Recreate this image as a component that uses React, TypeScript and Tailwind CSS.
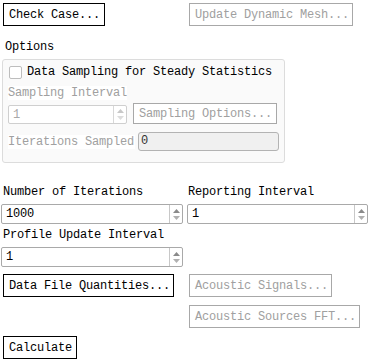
import React from "react";

const font = { fontFamily: '"Liberation Mono", "DejaVu Sans Mono", monospace' };

function Btn({ label, w, disabled, className = "" }: { label: string; w: string; disabled?: boolean; className?: string }) {
  return (
    <button
      className={`h-[23px] ${w} shrink-0 border text-left pl-[5px] text-[12px] leading-[20px] tracking-[-0.2px] whitespace-nowrap bg-white ${
        disabled ? "border-[#a8a8a8] text-[#a0a0a0]" : "border-black text-black"
      } ${className}`}
    >
      {label}
    </button>
  );
}

function Arrows({ disabled }: { disabled?: boolean }) {
  const c = disabled ? "#c8c8c8" : "#8a8a8a";
  return (
    <div className={`w-[13px] h-full flex flex-col items-center justify-center gap-[3px] border-l ${disabled ? "border-[#d8d8d8]" : "border-[#c8c8c8]"}`}>
      <svg width="7" height="4" viewBox="0 0 7 4">
        <path d="M3.5 0 L7 4 L0 4 Z" fill={c} />
      </svg>
      <svg width="7" height="4" viewBox="0 0 7 4">
        <path d="M0 0 L7 0 L3.5 4 Z" fill={disabled ? "#dcdcdc" : "#b0b0b0"} />
      </svg>
    </div>
  );
}

function Spinner({ value, w, h = "h-[20px]", disabled, className = "" }: { value: string; w: string; h?: string; disabled?: boolean; className?: string }) {
  return (
    <div
      className={`${w} ${h} shrink-0 flex border rounded-[2px] bg-white ${
        disabled ? "border-[#cfcfcf] text-[#a8a8a8]" : "border-[#a9a9a9] text-black"
      } ${className}`}
    >
      <div className="flex-1 pl-[4px] text-[12px] leading-[18px] tracking-[-0.2px]">{value}</div>
      <Arrows disabled={disabled} />
    </div>
  );
}

export default function App() {
  return (
    <div className="w-[369px] h-[362px] bg-white text-black text-[12px] tracking-[-0.2px] overflow-hidden" style={font}>
      <div className="flex pt-[3px]">
        <Btn label="Check Case..." w="w-[102px]" className="ml-[3px]" />
        <Btn label="Update Dynamic Mesh..." w="w-[164px]" disabled className="ml-[84px]" />
      </div>

      <div className="mt-[13px] h-[16px] leading-[16px] pl-[5px]">Options</div>

      <div className="mt-[4px] ml-[2px] w-[283px] h-[104px] border border-[#dcdcdc] rounded-[3px] bg-[#fafafa]">
        <div className="mt-[5px] h-[15px] flex items-center">
          <div className="ml-[6px] w-[13px] h-[13px] shrink-0 border border-[#bdbdbd] rounded-[2px] bg-white" />
          <span className="ml-[5px] leading-[15px] whitespace-nowrap">Data Sampling for Steady Statistics</span>
        </div>
        <div className="mt-[6px] h-[14px] leading-[14px] ml-[5px] w-fit bg-white text-[#a0a0a0] whitespace-nowrap">Sampling Interval</div>
        <div className="mt-[3px] flex items-start">
          <Spinner value="1" w="w-[119px]" h="h-[19px]" disabled className="ml-[5px] mt-[2px]" />
          <Btn label="Sampling Options..." w="w-[144px]" disabled className="ml-[6px] !h-[21px] !leading-[18px]" />
        </div>
        <div className="mt-[8px] flex items-center">
          <span className="ml-[5px] w-[127px] shrink-0 bg-white text-[#a0a0a0] leading-[14px] whitespace-nowrap">Iterations Sampled</span>
          <div className="ml-[3px] w-[141px] h-[19px] shrink-0 border border-[#b3b3b3] rounded-[3px] bg-[#f0f0f0] pl-[2px] leading-[17px] text-[#333]">
            0
          </div>
        </div>
      </div>

      <div className="mt-[21px] flex h-[16px] leading-[16px] whitespace-nowrap">
        <span className="ml-[3px] w-[182px]">Number of Iterations</span>
        <span className="ml-[3px]">Reporting Interval</span>
      </div>
      <div className="mt-[4px] flex">
        <Spinner value="1000" w="w-[182px]" className="ml-[1px]" />
        <Spinner value="1" w="w-[181px]" className="ml-[4px]" />
      </div>

      <div className="mt-[3px] h-[16px] leading-[16px] ml-[3px] whitespace-nowrap">Profile Update Interval</div>
      <div className="mt-[4px] flex">
        <Spinner value="1" w="w-[182px]" className="ml-[1px]" />
      </div>

      <div className="mt-[7px] flex">
        <Btn label="Data File Quantities..." w="w-[171px]" className="ml-[3px]" />
        <Btn label="Acoustic Signals..." w="w-[143px]" disabled className="ml-[15px]" />
      </div>
      <div className="mt-[8px] flex">
        <Btn label="Acoustic Sources FFT..." w="w-[171px]" disabled className="ml-[189px]" />
      </div>
      <div className="mt-[8px] flex">
        <Btn label="Calculate" w="w-[74px]" className="ml-[3px]" />
      </div>
    </div>
  );
}
